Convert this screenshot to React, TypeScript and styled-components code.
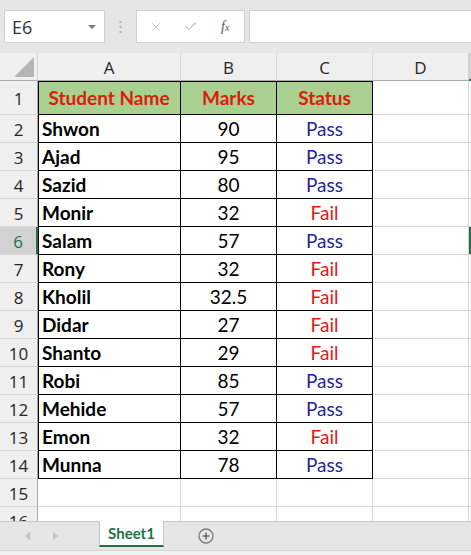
import React from 'react';
import styled, { createGlobalStyle, css } from 'styled-components';
import { X, Check } from 'lucide-react';

const GlobalStyle = createGlobalStyle`
  html, body {
    margin: 0;
    padding: 0;
    background: #e6e6e6;
    overflow: hidden;
  }
  * { box-sizing: border-box; }
`;

const GREEN = '#217346';

const Page = styled.div`
  width: 471px;
  height: 555px;
  display: flex;
  flex-direction: column;
  overflow: hidden;
  background: #e6e6e6;
  font-family: 'Open Sans', 'Noto Sans', sans-serif;
`;

/* ---------- formula bar ---------- */

const Toolbar = styled.div`
  height: 53px;
  flex: none;
  display: flex;
  align-items: flex-start;
  padding: 10px 0 0 4px;
`;

const NameBox = styled.div`
  width: 101px;
  height: 33px;
  background: #fff;
  border: 1px solid #d0d0d0;
  display: flex;
  align-items: center;
  justify-content: space-between;
  padding: 0 8px 0 7px;
  font-size: 18px;
  color: #333;
`;

const DropArrow = styled.span`
  width: 0;
  height: 0;
  border-left: 4px solid transparent;
  border-right: 4px solid transparent;
  border-top: 4px solid #7a7a7a;
`;

const Grip = styled.div`
  width: 31px;
  height: 33px;
  display: flex;
  align-items: center;
  justify-content: center;
`;

const FxButtons = styled.div`
  width: 109px;
  height: 33px;
  background: #fff;
  border: 1px solid #d0d0d0;
  display: flex;
  align-items: center;
  padding-left: 12px;
  gap: 20px;
  color: #c4c4c4;
`;

const FxLabel = styled.span`
  font-family: 'Liberation Serif', serif;
  font-style: italic;
  font-size: 14px;
  color: #555;
  margin-left: 3px;

  small {
    font-size: 10px;
  }
`;

const FormulaInput = styled.div`
  flex: 1;
  height: 33px;
  margin-left: 4px;
  background: #fff;
  border: 1px solid #d0d0d0;
  border-right: none;
`;

/* ---------- sheet grid ---------- */

const Sheet = styled.div`
  height: 468px;
  flex: none;
  overflow: hidden;
  background: #fff;
  display: grid;
  grid-template-columns: 38px 143px 96px 96px 96px 40px;
  grid-template-rows: 28px 34px;
  grid-auto-rows: 28px;
`;

const Corner = styled.div`
  background: #efefef;
  border-right: 1px solid #d4d4d4;
  border-bottom: 1px solid #ababab;
  display: flex;
  align-items: flex-end;
  justify-content: flex-end;
  padding: 0 3px 3px 0;
`;

const ColHead = styled.div<{ $selected?: boolean }>`
  background: ${(p) => (p.$selected ? '#d2d2d2' : '#efefef')};
  border-right: 1px solid #d4d4d4;
  border-bottom: ${(p) => (p.$selected ? `2px solid ${GREEN}` : '1px solid #ababab')};
  display: flex;
  align-items: center;
  justify-content: center;
  font-size: 17px;
  color: #262626;
  padding-top: 1px;
`;

const RowHead = styled.div<{ $selected?: boolean }>`
  background: ${(p) => (p.$selected ? '#d2d2d2' : '#efefef')};
  color: ${(p) => (p.$selected ? GREEN : '#262626')};
  border-right: ${(p) => (p.$selected ? `2px solid ${GREEN}` : '1px solid #ababab')};
  border-bottom: 1px solid #d4d4d4;
  display: flex;
  align-items: center;
  justify-content: center;
  font-size: 17px;
  padding-top: 2px;
`;

type CellProps = {
  $boxed?: boolean;
  $left?: boolean;
  $top?: boolean;
  $fill?: boolean;
  $align?: 'left' | 'center';
  $color?: string;
  $bold?: boolean;
  $selected?: boolean;
};

const Cell = styled.div<CellProps>`
  border-right: 1px solid ${(p) => (p.$boxed ? '#000' : '#d4d4d4')};
  border-bottom: 1px solid ${(p) => (p.$boxed ? '#000' : '#d4d4d4')};
  background: ${(p) => (p.$fill ? '#a9d08e' : '#fff')};
  display: flex;
  align-items: center;
  justify-content: ${(p) => (p.$align === 'left' ? 'flex-start' : 'center')};
  padding: 0 0 0 ${(p) => (p.$align === 'left' ? '4px' : '0')};
  font-family: 'Lato', 'Open Sans', sans-serif;
  font-size: 19px;
  font-weight: ${(p) => (p.$bold ? 700 : 400)};
  color: ${(p) => p.$color || '#000'};
  white-space: nowrap;
  ${(p) => {
    const shadows: string[] = [];
    if (p.$left) shadows.push('inset 1px 0 0 #000');
    if (p.$top) shadows.push('inset 0 1px 0 #000');
    if (p.$selected) shadows.push(`inset 2px 0 0 ${GREEN}`, `inset 0 2px 0 ${GREEN}`, `inset 0 -2px 0 ${GREEN}`);
    return shadows.length ? css`box-shadow: ${shadows.join(', ')};` : '';
  }}
`;

/* ---------- sheet tabs ---------- */

const TabBar = styled.div`
  height: 29px;
  flex: none;
  display: flex;
  align-items: flex-start;
  background: #e6e6e6;
  border-top: 1px solid #c8c8c8;
`;

const NavArrows = styled.div`
  width: 99px;
  height: 28px;
  display: flex;
  align-items: center;
  padding-left: 25px;
  gap: 23px;
`;

const NavArrow = styled.span<{ $dir: 'left' | 'right' }>`
  width: 0;
  height: 0;
  border-top: 4px solid transparent;
  border-bottom: 4px solid transparent;
  ${(p) =>
    p.$dir === 'left'
      ? css`border-right: 5px solid #c2c2c2;`
      : css`border-left: 5px solid #c2c2c2;`}
`;

const SheetTab = styled.div`
  width: 65px;
  height: 26px;
  margin-top: -1px;
  background: #fff;
  border-left: 1px solid #c8c8c8;
  border-right: 1px solid #c8c8c8;
  border-bottom: 2px solid ${GREEN};
  display: flex;
  align-items: center;
  justify-content: center;
  font-family: 'Lato', 'Open Sans', sans-serif;
  font-weight: 700;
  font-size: 15px;
  color: ${GREEN};
`;

const AddSheet = styled.div`
  margin-left: 34px;
  height: 28px;
  display: flex;
  align-items: center;
`;

const StatusBar = styled.div`
  height: 5px;
  flex: none;
  background: #f1f1f1;
  border-top: 1px solid #d6d6d6;
`;

const rows = [
  { name: 'Shwon', marks: '90', pass: true },
  { name: 'Ajad', marks: '95', pass: true },
  { name: 'Sazid', marks: '80', pass: true },
  { name: 'Monir', marks: '32', pass: false },
  { name: 'Salam', marks: '57', pass: true },
  { name: 'Rony', marks: '32', pass: false },
  { name: 'Kholil', marks: '32.5', pass: false },
  { name: 'Didar', marks: '27', pass: false },
  { name: 'Shanto', marks: '29', pass: false },
  { name: 'Robi', marks: '85', pass: true },
  { name: 'Mehide', marks: '57', pass: true },
  { name: 'Emon', marks: '32', pass: false },
  { name: 'Munna', marks: '78', pass: true },
];

const RED = '#e8161b';
const HEAD_RED = '#dc1c0c';
const BLUE = '#25259a';

export default function App() {
  return (
    <Page>
      <GlobalStyle />
      <Toolbar>
        <NameBox>
          E6
          <DropArrow />
        </NameBox>
        <Grip>
          <svg width="3" height="12" viewBox="0 0 3 12">
            <rect x="0.5" y="0" width="2" height="2" fill="#b0b0b0" />
            <rect x="0.5" y="5" width="2" height="2" fill="#b0b0b0" />
            <rect x="0.5" y="10" width="2" height="2" fill="#b0b0b0" />
          </svg>
        </Grip>
        <FxButtons>
          <X size={14} strokeWidth={1.6} />
          <Check size={15} strokeWidth={2} />
          <FxLabel>
            f<small>x</small>
          </FxLabel>
        </FxButtons>
        <FormulaInput />
      </Toolbar>

      <Sheet>
        <Corner>
          <svg width="20" height="20" viewBox="0 0 20 20">
            <polygon points="20,0 20,20 0,20" fill="#b5b5b5" />
          </svg>
        </Corner>
        <ColHead>A</ColHead>
        <ColHead>B</ColHead>
        <ColHead>C</ColHead>
        <ColHead>D</ColHead>
        <ColHead $selected />

        <RowHead>1</RowHead>
        <Cell $boxed $left $top $fill $bold $color={HEAD_RED}>Student Name</Cell>
        <Cell $boxed $top $fill $bold $color={HEAD_RED}>Marks</Cell>
        <Cell $boxed $top $fill $bold $color={HEAD_RED}>Status</Cell>
        <Cell />
        <Cell />

        {rows.map((r, i) => {
          const n = i + 2;
          return (
            <React.Fragment key={r.name}>
              <RowHead $selected={n === 6}>{n}</RowHead>
              <Cell $boxed $left $align="left" $bold>{r.name}</Cell>
              <Cell $boxed>{r.marks}</Cell>
              <Cell $boxed $color={r.pass ? BLUE : RED}>{r.pass ? 'Pass' : 'Fail'}</Cell>
              <Cell />
              <Cell $selected={n === 6} />
            </React.Fragment>
          );
        })}

        {[15, 16].map((n) => (
          <React.Fragment key={n}>
            <RowHead>{n}</RowHead>
            <Cell />
            <Cell />
            <Cell />
            <Cell />
            <Cell />
          </React.Fragment>
        ))}
      </Sheet>

      <TabBar>
        <NavArrows>
          <NavArrow $dir="left" />
          <NavArrow $dir="right" />
        </NavArrows>
        <SheetTab>Sheet1</SheetTab>
        <AddSheet>
          <svg width="16" height="16" viewBox="0 0 16 16">
            <circle cx="8" cy="8" r="7" fill="none" stroke="#7a7a7a" strokeWidth="1.3" />
            <path d="M8 4.5v7M4.5 8h7" stroke="#6a6a6a" strokeWidth="1.5" />
          </svg>
        </AddSheet>
      </TabBar>
      <StatusBar />
    </Page>
  );
}
